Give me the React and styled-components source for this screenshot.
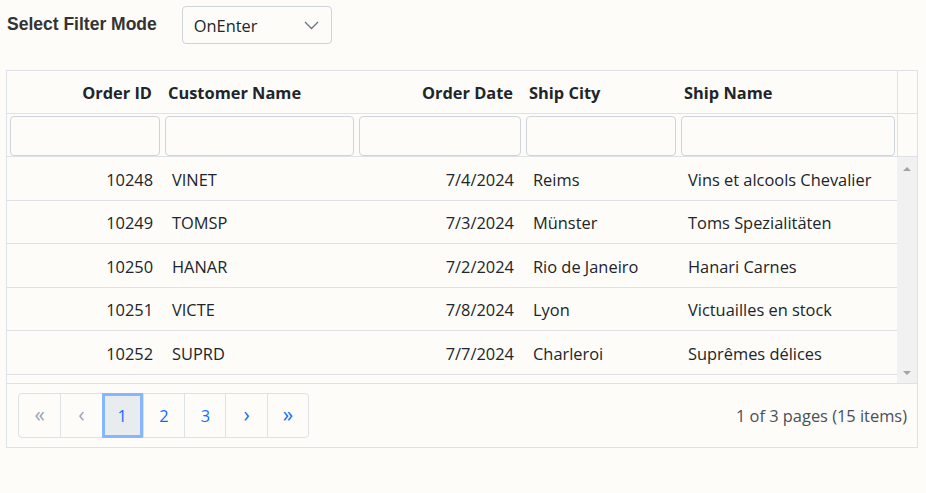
import React from 'react';
import styled, { createGlobalStyle } from 'styled-components';

const GlobalStyle = createGlobalStyle`
  body {
    margin: 0;
    background: #fdfcf9;
    font-family: "Open Sans", "Noto Sans", sans-serif;
    color: #212529;
  }
`;

const Page = styled.div`
  padding: 6px 8px 0 6px;
`;

const Toolbar = styled.div`
  display: flex;
  align-items: center;
  gap: 25px;
  padding-left: 1px;
  margin-bottom: 26px;
`;

const Label = styled.label`
  font-family: "Liberation Sans", Arial, sans-serif;
  font-weight: bold;
  font-size: 17.5px;
  color: #333;
  margin-top: -1px;
`;

const Select = styled.div`
  box-sizing: border-box;
  width: 150px;
  height: 38px;
  border: 1px solid #ced4da;
  border-radius: 4px;
  display: flex;
  align-items: center;
  justify-content: space-between;
  padding: 1px 12px 0 11px;
  font-size: 16.4px;
  color: #212529;
`;

const Grid = styled.div`
  box-sizing: border-box;
  width: 912px;
  border: 1px solid #dee2e6;
`;

const Row = styled.div`
  display: grid;
  grid-template-columns: 155px 194px 167px 155px 219px 20px;
  box-sizing: border-box;
  height: 43px;
  border-bottom: 1px solid #dee2e6;
  align-items: center;
`;

const HeadCell = styled.div`
  font-weight: 700;
  font-size: 16.4px;
  padding: 1px 10px 0 6px;
  text-align: ${p => (p.$right ? 'right' : 'left')};
  white-space: nowrap;
`;

const ScrollGap = styled.div`
  align-self: stretch;
  border-left: 1px solid #dee2e6;
`;

const FilterCell = styled.div`
  padding: 0 2px 0 3px;
  height: 100%;
  display: flex;
  align-items: center;
`;

const FilterInput = styled.input`
  box-sizing: border-box;
  width: 100%;
  height: 40px;
  margin-top: 1px;
  border: 1px solid #ced4da;
  border-radius: 4px;
  background: transparent;
`;

const Body = styled.div`
  display: flex;
  height: 226px;
  border-bottom: 1px solid #dee2e6;
`;

const Rows = styled.div`
  width: 890px;
`;

const DataRow = styled.div`
  display: grid;
  grid-template-columns: 155px 194px 167px 155px 219px;
  box-sizing: border-box;
  height: 43.5px;
  border-bottom: 1px solid #dee2e6;
  align-items: center;
`;

const Cell = styled.div`
  font-size: 16.4px;
  padding: 2px 9px 0 10px;
  text-align: ${p => (p.$right ? 'right' : 'left')};
  white-space: nowrap;
  overflow: hidden;
`;

const ScrollBar = styled.div`
  width: 20px;
  background: #f1f1f1;
  display: flex;
  flex-direction: column;
  justify-content: space-between;
  align-items: center;
  padding: 10px 0 8px;
  box-sizing: border-box;
`;

const Arrow = styled.div`
  width: 0;
  height: 0;
  border-left: 4px solid transparent;
  border-right: 4px solid transparent;
  ${p => (p.$down ? 'border-top: 4px solid #a3a3a3;' : 'border-bottom: 4px solid #a3a3a3;')}
`;

const Footer = styled.div`
  display: flex;
  align-items: center;
  justify-content: space-between;
  padding: 9px 10px 9px 11px;
`;

const Pager = styled.div`
  display: flex;
  border: 1px solid #dee2e6;
  border-radius: 4px;
  height: 45px;
  box-sizing: border-box;
`;

const PageBtn = styled.div`
  box-sizing: border-box;
  width: 41.3px;
  height: ${p => (p.$active ? 45 : 43)}px;
  margin: ${p => (p.$active ? '-1px 0' : '0')};
  display: flex;
  align-items: center;
  justify-content: center;
  font-size: ${p => (p.$icon ? 21 : 16.4)}px;
  padding-bottom: ${p => (p.$icon ? 3 : 0)}px;
  color: ${p => (p.$disabled ? '#9aa6b8' : '#0d6efd')};
  border-left: ${p => (p.$first ? 'none' : '1px solid #dee2e6')};
  ${p => p.$active && 'background: #e9ecef; border: 3px solid #86b7fe;'}
`;

const Summary = styled.div`
  font-size: 16.4px;
  color: #495057;
`;

const orders = [
  ['10248', 'VINET', '7/4/2024', 'Reims', 'Vins et alcools Chevalier'],
  ['10249', 'TOMSP', '7/3/2024', 'Münster', 'Toms Spezialitäten'],
  ['10250', 'HANAR', '7/2/2024', 'Rio de Janeiro', 'Hanari Carnes'],
  ['10251', 'VICTE', '7/8/2024', 'Lyon', 'Victuailles en stock'],
  ['10252', 'SUPRD', '7/7/2024', 'Charleroi', 'Suprêmes délices'],
];

export default function App() {
  return (
    <Page>
      <GlobalStyle />
      <Toolbar>
        <Label>Select Filter Mode</Label>
        <Select>
          <span>OnEnter</span>
          <svg width="15" height="9" viewBox="0 0 15 9">
            <polyline points="1,1 7.5,7.5 14,1" fill="none" stroke="#6a7480" strokeWidth="1.3" />
          </svg>
        </Select>
      </Toolbar>
      <Grid>
        <Row>
          <HeadCell $right>Order ID</HeadCell>
          <HeadCell>Customer Name</HeadCell>
          <HeadCell $right>Order Date</HeadCell>
          <HeadCell>Ship City</HeadCell>
          <HeadCell>Ship Name</HeadCell>
          <ScrollGap />
        </Row>
        <Row>
          {[0, 1, 2, 3, 4].map(i => (
            <FilterCell key={i}>
              <FilterInput />
            </FilterCell>
          ))}
          <ScrollGap />
        </Row>
        <Body>
          <Rows>
            {orders.map(o => (
              <DataRow key={o[0]}>
                <Cell $right>{o[0]}</Cell>
                <Cell>{o[1]}</Cell>
                <Cell $right>{o[2]}</Cell>
                <Cell>{o[3]}</Cell>
                <Cell>{o[4]}</Cell>
              </DataRow>
            ))}
          </Rows>
          <ScrollBar>
            <Arrow />
            <Arrow $down />
          </ScrollBar>
        </Body>
        <Footer>
          <Pager>
            <PageBtn $first $disabled $icon>«</PageBtn>
            <PageBtn $disabled $icon>‹</PageBtn>
            <PageBtn $active>1</PageBtn>
            <PageBtn>2</PageBtn>
            <PageBtn>3</PageBtn>
            <PageBtn $icon>›</PageBtn>
            <PageBtn $icon>»</PageBtn>
          </Pager>
          <Summary>1 of 3 pages (15 items)</Summary>
        </Footer>
      </Grid>
    </Page>
  );
}
